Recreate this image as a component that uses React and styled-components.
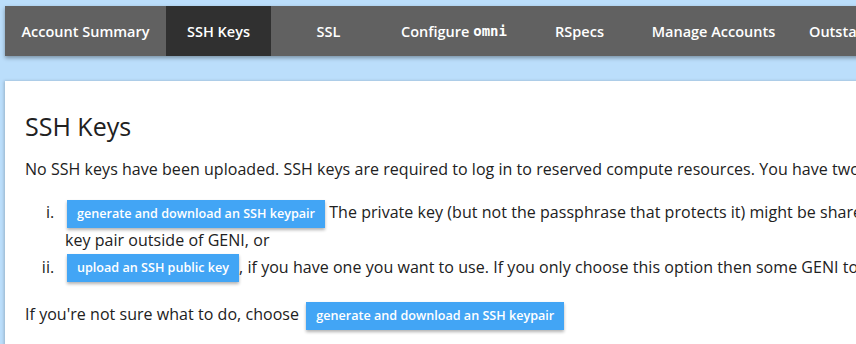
import * as React from "react";
import styled, { createGlobalStyle } from "styled-components";

const GlobalStyle = createGlobalStyle`
  html, body {
    margin: 0;
    padding: 0;
    background: #bbdefb;
    overflow: hidden;
  }
  body {
    font-family: "Open Sans", "Liberation Sans", sans-serif;
    color: #212121;
  }
`

const Page = styled.div`
  width: 1500px;
  padding: 6px 0 0 5px;
`

const NavBar = styled.nav`
  display: flex;
  height: 50px;
  background: #616161;
  box-shadow: 0 2px 4px rgba(0, 0, 0, 0.35);
`

const NavItem = styled.a`
  display: flex;
  align-items: center;
  justify-content: center;
  flex: none;
  width: ${(p) => (p.$width ? `${p.$width}px` : "auto")};
  padding: ${(p) => (p.$width ? "0" : "0 19px")};
  box-sizing: border-box;
  font-size: 14.5px;
  font-weight: 600;
  color: #fff;
  text-decoration: none;
  white-space: nowrap;
  background: ${(p) => (p.$active ? "#303030" : "transparent")};
`

const Mono = styled.code`
  font-family: "DejaVu Sans Mono", "Liberation Mono", monospace;
  font-size: 14px;
  font-weight: 600;
`

const Panel = styled.main`
  margin-top: 25px;
  background: #fff;
  padding: 12px 20px 30px;
  box-shadow: -1px 0 3px rgba(0, 0, 0, 0.2);
  min-height: 300px;
`

const Title = styled.h1`
  font-size: 25px;
  font-weight: 400;
  line-height: 30px;
  margin: 18px 0 0;
`

const Para = styled.p`
  font-size: 16px;
  letter-spacing: 0.04px;
  line-height: 27px;
  margin: ${(p) => p.$margin || "15px 0 0"};
  white-space: nowrap;
`

const Steps = styled.ol`
  margin: 16px 0 0;
  padding-left: 40px;
  font-size: 16px;
  letter-spacing: 0.04px;
  line-height: 27px;

  li::marker {
    content: counter(list-item, lower-roman) ".\\2002\\2009";
  }
`

const Step = styled.li`
  white-space: nowrap;
`

const Button = styled.a`
  display: inline-block;
  height: 28px;
  line-height: 28px;
  margin: -1px 0 -1px ${(p) => p.$ml || "2px"};
  padding: 0 10px;
  background: #42a5f5;
  color: #fff;
  font-size: 12.6px;
  font-weight: 600;
  letter-spacing: 0;
  text-decoration: none;
  vertical-align: middle;
  box-shadow: 0 2px 3px rgba(0, 0, 0, 0.3);
`

const tabs = [
  { label: "Account Summary", width: 161 },
  { label: "SSH Keys", width: 105, active: true },
  { label: "SSL", width: 115 },
  { label: "configure", width: 136 },
  { label: "RSpecs", width: 115 },
  { label: "Manage Accounts", width: 153 },
  { label: "Outstanding Requests" },
]

const App = () => (
  <Page>
    <GlobalStyle />
    <NavBar>
      {tabs.map((t) => (
        <NavItem key={t.label} href="#" $width={t.width} $active={t.active}>
          {t.label === "configure" ? (
            <>
              Configure&nbsp;<Mono>omni</Mono>
            </>
          ) : (
            t.label
          )}
        </NavItem>
      ))}
    </NavBar>
    <Panel>
      <Title>SSH Keys</Title>
      <Para>
        No SSH keys have been uploaded. SSH keys are required to log in to reserved compute
        resources. You have two options:
      </Para>
      <Steps>
        <Step>
          <Button href="#">generate and download an SSH keypair</Button> The private key (but
          not the passphrase that protects it) might be shared with GENI tools if you do not use this
          <br />
          key pair outside of GENI, or
        </Step>
        <Step>
          <Button href="#">upload an SSH public key</Button>, if you have one you want to use. If
          you only choose this option then some GENI tools may not work.
        </Step>
      </Steps>
      <Para $margin="20px 0 0">
        If you're not sure what to do, choose{" "}
        <Button href="#" $ml="3px">generate and download an SSH keypair</Button>
      </Para>
    </Panel>
  </Page>
)

export default App
